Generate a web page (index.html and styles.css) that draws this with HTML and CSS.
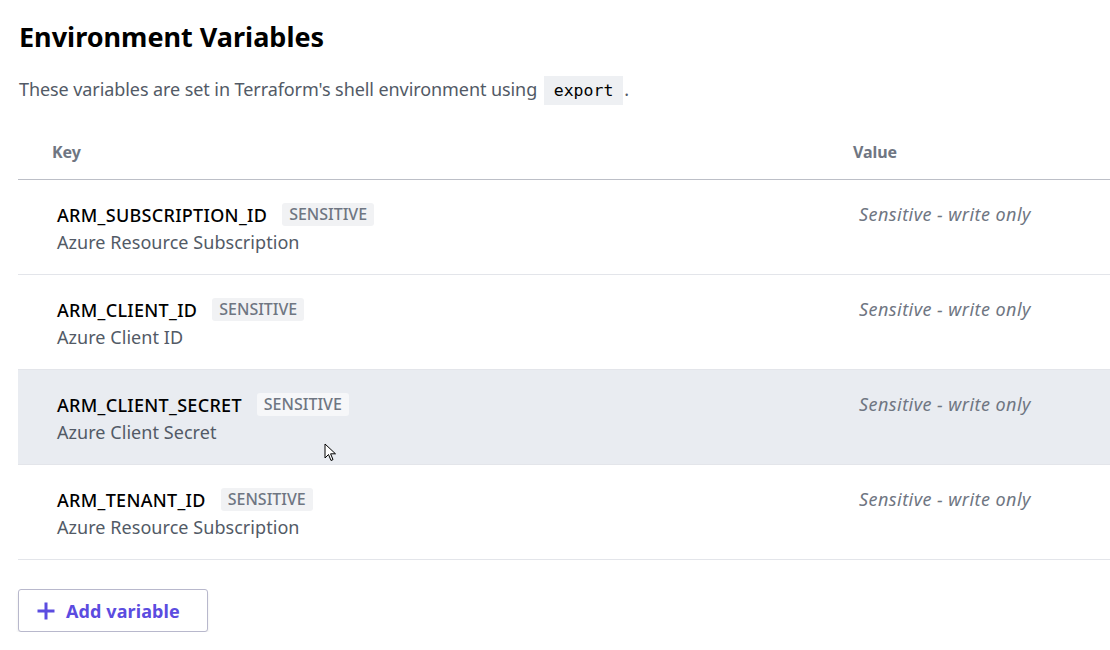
FILE: index.html
```html
<!DOCTYPE html>
<html lang="en">
<head>
<meta charset="utf-8">
<title>Environment Variables</title>
<link rel="stylesheet" href="styles.css">
</head>
<body>
<main class="page">
  <h1 class="title">Environment Variables</h1>
  <p class="desc">These variables are set in Terraform's shell environment using <code class="code">export</code>.</p>

  <div class="table">
    <div class="thead">
      <div class="th th-key">Key</div>
      <div class="th th-value">Value</div>
    </div>

    <div class="row">
      <div class="cell-key">
        <div class="key-line"><span class="key">ARM_SUBSCRIPTION_ID</span><span class="badge">SENSITIVE</span></div>
        <div class="key-desc">Azure Resource Subscription</div>
      </div>
      <div class="cell-value">Sensitive - write only</div>
    </div>

    <div class="row">
      <div class="cell-key">
        <div class="key-line"><span class="key">ARM_CLIENT_ID</span><span class="badge">SENSITIVE</span></div>
        <div class="key-desc">Azure Client ID</div>
      </div>
      <div class="cell-value">Sensitive - write only</div>
    </div>

    <div class="row row-hover">
      <div class="cell-key">
        <div class="key-line"><span class="key">ARM_CLIENT_SECRET</span><span class="badge">SENSITIVE</span></div>
        <div class="key-desc">Azure Client Secret</div>
      </div>
      <div class="cell-value">Sensitive - write only</div>
      <svg class="cursor" width="14" height="20" viewBox="0 0 14 20" aria-hidden="true">
        <path d="M1 1 L1 15 L4.5 11.5 L7 17.5 L9 16.6 L6.6 10.8 L11.5 10.8 Z" fill="#fff" stroke="#000" stroke-width="1" stroke-linejoin="round"/>
      </svg>
    </div>

    <div class="row">
      <div class="cell-key">
        <div class="key-line"><span class="key">ARM_TENANT_ID</span><span class="badge">SENSITIVE</span></div>
        <div class="key-desc">Azure Resource Subscription</div>
      </div>
      <div class="cell-value">Sensitive - write only</div>
    </div>
  </div>

  <button class="add-btn" type="button">
    <svg class="plus" width="18" height="18" viewBox="0 0 18 18" aria-hidden="true">
      <path d="M9 0.5v17M0.5 9h17" stroke="#5b4ce0" stroke-width="3" stroke-linecap="butt"/>
    </svg>
    <span>Add variable</span>
  </button>
</main>
</body>
</html>
```

FILE: styles.css
```css
* { box-sizing: border-box; }

html, body {
  margin: 0;
  padding: 0;
  background: #ffffff;
}

body {
  font-family: "Noto Sans", "Open Sans", sans-serif;
  color: #000;
}

.page {
  padding: 18px 0 0 18px;
}

.title {
  margin: 0 0 0 1px;
  font-size: 27px;
  font-weight: 700;
  line-height: 38px;
  letter-spacing: 0;
  color: #000;
}

.desc {
  margin: 17px 0 0 1px;
  font-size: 18px;
  line-height: 32px;
  color: #525a66;
  letter-spacing: -0.08px;
}

.code {
  display: inline-block;
  font-family: "DejaVu Sans Mono", "Liberation Mono", monospace;
  font-size: 16.5px;
  line-height: 29px;
  padding: 0 10px;
  background: #eef0f3;
  color: #000;
  letter-spacing: 0;
  margin: 0 1px 0 2px;
}

.table {
  margin-top: 25px;
  width: 1092px;
}

.thead {
  display: grid;
  grid-template-columns: 835px 1fr;
  height: 50px;
  padding-bottom: 6px;
  align-items: center;
  border-bottom: 1px solid #bcbfc7;
}

.th {
  font-size: 16px;
  font-weight: 700;
  color: #6f7682;
  letter-spacing: -0.1px;
}

.th-key { padding-left: 34px; }
.th-value { padding-left: 0; }

.row {
  position: relative;
  display: grid;
  grid-template-columns: 835px 1fr;
  height: 95px;
  border-bottom: 1px solid #e3e5ea;
  padding-top: 22px;
}

.row-hover { background: #e9ecf1; }

.cell-key { padding-left: 39px; }

.key-line {
  display: flex;
  align-items: center;
  gap: 15px;
  height: 25px;
}

.key {
  font-size: 18px;
  font-weight: 500;
  color: #000;
  letter-spacing: 0.3px;
}

.badge {
  display: inline-block;
  font-size: 16px;
  font-weight: 500;
  color: #6f7682;
  background: #f1f2f4;
  border-radius: 3px;
  padding: 0 7px;
  line-height: 23px;
  letter-spacing: 0;
}

.row-hover .badge { background: #f6f7f9; }

.key-desc {
  margin-top: 3px;
  font-size: 18px;
  line-height: 25px;
  color: #525a66;
  letter-spacing: 0.05px;
}

.cell-value {
  padding-left: 6px;
  font-size: 18px;
  font-style: italic;
  line-height: 25px;
  color: #6f7682;
  letter-spacing: 0.45px;
}

.cursor {
  position: absolute;
  left: 306px;
  top: 73px;
}

.add-btn {
  margin-top: 29px;
  display: flex;
  align-items: center;
  gap: 11px;
  width: 190px;
  height: 43px;
  padding: 0 0 0 18px;
  background: #fff;
  border: 1px solid #b8b8cc;
  border-radius: 3px;
  box-shadow: 0 3px 3px rgba(0, 0, 0, 0.08);
  font-family: "Noto Sans", "Open Sans", sans-serif;
  font-size: 18px;
  font-weight: 700;
  color: #5b4ce0;
  letter-spacing: 0.1px;
  cursor: pointer;
}

.plus { flex: none; }
```
